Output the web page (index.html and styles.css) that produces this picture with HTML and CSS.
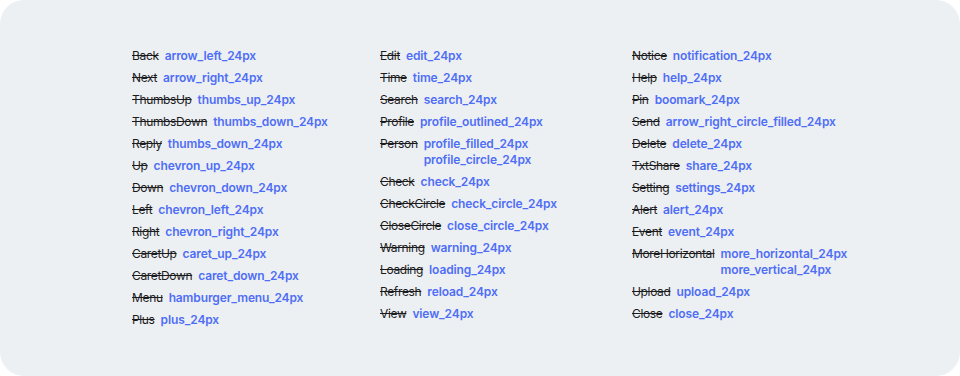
FILE: index.html
```html
<!DOCTYPE html>
<html lang="en">
<head>
    <meta charset="UTF-8">
    <title>Icon renames</title>
    <link rel="stylesheet" href="styles.css">
</head>
<body>
    <div class="panel">
        <div class="columns">
            <div class="column">
                <div class="row"><span class="old">Back</span><div class="new"><span>arrow_left_24px</span></div></div>
                <div class="row"><span class="old">Next</span><div class="new"><span>arrow_right_24px</span></div></div>
                <div class="row"><span class="old">ThumbsUp</span><div class="new"><span>thumbs_up_24px</span></div></div>
                <div class="row"><span class="old">ThumbsDown</span><div class="new"><span>thumbs_down_24px</span></div></div>
                <div class="row"><span class="old">Reply</span><div class="new"><span>thumbs_down_24px</span></div></div>
                <div class="row"><span class="old">Up</span><div class="new"><span>chevron_up_24px</span></div></div>
                <div class="row"><span class="old">Down</span><div class="new"><span>chevron_down_24px</span></div></div>
                <div class="row"><span class="old">Left</span><div class="new"><span>chevron_left_24px</span></div></div>
                <div class="row"><span class="old">Right</span><div class="new"><span>chevron_right_24px</span></div></div>
                <div class="row"><span class="old">CaretUp</span><div class="new"><span>caret_up_24px</span></div></div>
                <div class="row"><span class="old">CaretDown</span><div class="new"><span>caret_down_24px</span></div></div>
                <div class="row"><span class="old">Menu</span><div class="new"><span>hamburger_menu_24px</span></div></div>
                <div class="row"><span class="old">Plus</span><div class="new"><span>plus_24px</span></div></div>
            </div>
            <div class="column">
                <div class="row"><span class="old">Edit</span><div class="new"><span>edit_24px</span></div></div>
                <div class="row"><span class="old">Time</span><div class="new"><span>time_24px</span></div></div>
                <div class="row"><span class="old">Search</span><div class="new"><span>search_24px</span></div></div>
                <div class="row"><span class="old">Profile</span><div class="new"><span>profile_outlined_24px</span></div></div>
                <div class="row"><span class="old">Person</span><div class="new"><span>profile_filled_24px</span><span>profile_circle_24px</span></div></div>
                <div class="row"><span class="old">Check</span><div class="new"><span>check_24px</span></div></div>
                <div class="row"><span class="old">CheckCircle</span><div class="new"><span>check_circle_24px</span></div></div>
                <div class="row"><span class="old">CloseCircle</span><div class="new"><span>close_circle_24px</span></div></div>
                <div class="row"><span class="old">Warning</span><div class="new"><span>warning_24px</span></div></div>
                <div class="row"><span class="old">Loading</span><div class="new"><span>loading_24px</span></div></div>
                <div class="row"><span class="old">Refresh</span><div class="new"><span>reload_24px</span></div></div>
                <div class="row"><span class="old">View</span><div class="new"><span>view_24px</span></div></div>
            </div>
            <div class="column">
                <div class="row"><span class="old">Notice</span><div class="new"><span>notification_24px</span></div></div>
                <div class="row"><span class="old">Help</span><div class="new"><span>help_24px</span></div></div>
                <div class="row"><span class="old">Pin</span><div class="new"><span>boomark_24px</span></div></div>
                <div class="row"><span class="old">Send</span><div class="new"><span>arrow_right_circle_filled_24px</span></div></div>
                <div class="row"><span class="old">Delete</span><div class="new"><span>delete_24px</span></div></div>
                <div class="row"><span class="old">TxtShare</span><div class="new"><span>share_24px</span></div></div>
                <div class="row"><span class="old">Setting</span><div class="new"><span>settings_24px</span></div></div>
                <div class="row"><span class="old">Alert</span><div class="new"><span>alert_24px</span></div></div>
                <div class="row"><span class="old">Event</span><div class="new"><span>event_24px</span></div></div>
                <div class="row"><span class="old">MoreHorizontal</span><div class="new"><span>more_horizontal_24px</span><span>more_vertical_24px</span></div></div>
                <div class="row"><span class="old">Upload</span><div class="new"><span>upload_24px</span></div></div>
                <div class="row"><span class="old">Close</span><div class="new"><span>close_24px</span></div></div>
            </div>
        </div>
    </div>
</body>
</html>
```

FILE: styles.css
```css
body {
    margin: 0;
    padding: 0;
    background-color: #ffffff;
    font-family: Inter, "Noto Sans", sans-serif;
    font-size: 12px;
    line-height: 16px;
}
.panel {
    height: 376px;
    box-sizing: border-box;
    background-color: #edf0f3;
    border-radius: 24px;
    padding: 48px 0 0 132px;
}
.columns {
    display: grid;
    grid-template-columns: 248px 252px auto;
}
.column {
    display: flex;
    flex-direction: column;
    gap: 6px;
}
.row {
    display: flex;
    gap: 6px;
}
.old {
    color: #1c1c1e;
    letter-spacing: -0.35px;
    text-decoration: line-through;
}
.new {
    display: flex;
    flex-direction: column;
    color: #4f6ef6;
    font-weight: 600;
    letter-spacing: -0.12px;
}
```
